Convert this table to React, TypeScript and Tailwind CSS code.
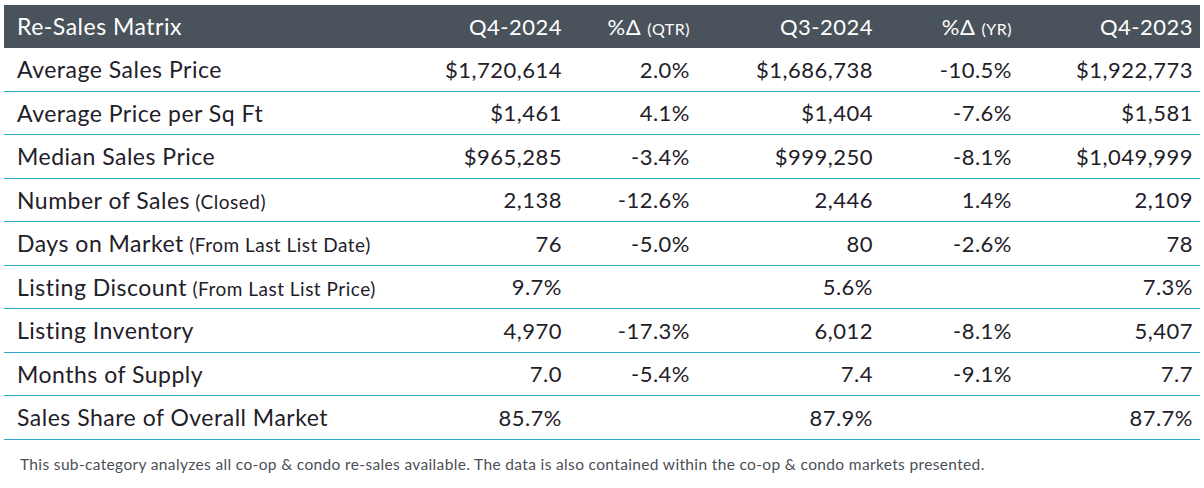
import React from "react";

type Row = {
  label: string;
  note?: string;
  values: string[];
};

const rows: Row[] = [
  { label: "Average Sales Price", values: ["$1,720,614", "2.0%", "$1,686,738", "-10.5%", "$1,922,773"] },
  { label: "Average Price per Sq Ft", values: ["$1,461", "4.1%", "$1,404", "-7.6%", "$1,581"] },
  { label: "Median Sales Price", values: ["$965,285", "-3.4%", "$999,250", "-8.1%", "$1,049,999"] },
  { label: "Number of Sales", note: "(Closed)", values: ["2,138", "-12.6%", "2,446", "1.4%", "2,109"] },
  { label: "Days on Market", note: "(From Last List Date)", values: ["76", "-5.0%", "80", "-2.6%", "78"] },
  { label: "Listing Discount", note: "(From Last List Price)", values: ["9.7%", "", "5.6%", "", "7.3%"] },
  { label: "Listing Inventory", values: ["4,970", "-17.3%", "6,012", "-8.1%", "5,407"] },
  { label: "Months of Supply", values: ["7.0", "-5.4%", "7.4", "-9.1%", "7.7"] },
  { label: "Sales Share of Overall Market", values: ["85.7%", "", "87.9%", "", "87.7%"] },
];

const cols = "grid grid-cols-[416px_149px_128px_183px_139px_181px]";

function App() {
  return (
    <div className="w-[1204px] h-[488px] bg-white pt-[5px] pl-[4px] font-['Lato',sans-serif] text-[#1f2029]">
      <div className="w-[1196px]">
        <div className={`${cols} h-[43px] bg-[#4a535b] text-white text-[22px] tracking-[0.5px] items-center`}>
          <div className="pl-[13px] text-[23px]">Re-Sales Matrix</div>
          <div className="text-right pr-[7px]">Q4-2024</div>
          <div className="text-right pr-[7px]">
            %Δ <span className="text-[16px]">(QTR)</span>
          </div>
          <div className="text-right pr-[7px]">Q3-2024</div>
          <div className="text-right pr-[7px]">
            %Δ <span className="text-[16px]">(YR)</span>
          </div>
          <div className="text-right pr-[7px]">Q4-2023</div>
        </div>
        {rows.map((row, i) => (
          <div
            key={i}
            className={`${cols} h-[43.5px] border-b-[1.5px] border-[#2ea6c6] items-center text-[22px] tracking-[0.5px]`}
          >
            <div className="pl-[13px] whitespace-nowrap text-[23px]">
              {row.label}
              {row.note && <span className="text-[19px]"> {row.note}</span>}
            </div>
            {row.values.map((v, j) => (
              <div key={j} className="text-right pr-[7px]">
                {v}
              </div>
            ))}
          </div>
        ))}
        <p className="pl-[16px] pt-[13px] text-[15.5px] tracking-[0.35px] text-[#4b4f57]">
          This sub-category analyzes all co-op &amp; condo re-sales available. The data is also contained within the co-op &amp; condo markets presented.
        </p>
      </div>
    </div>
  );
}

export default App;
